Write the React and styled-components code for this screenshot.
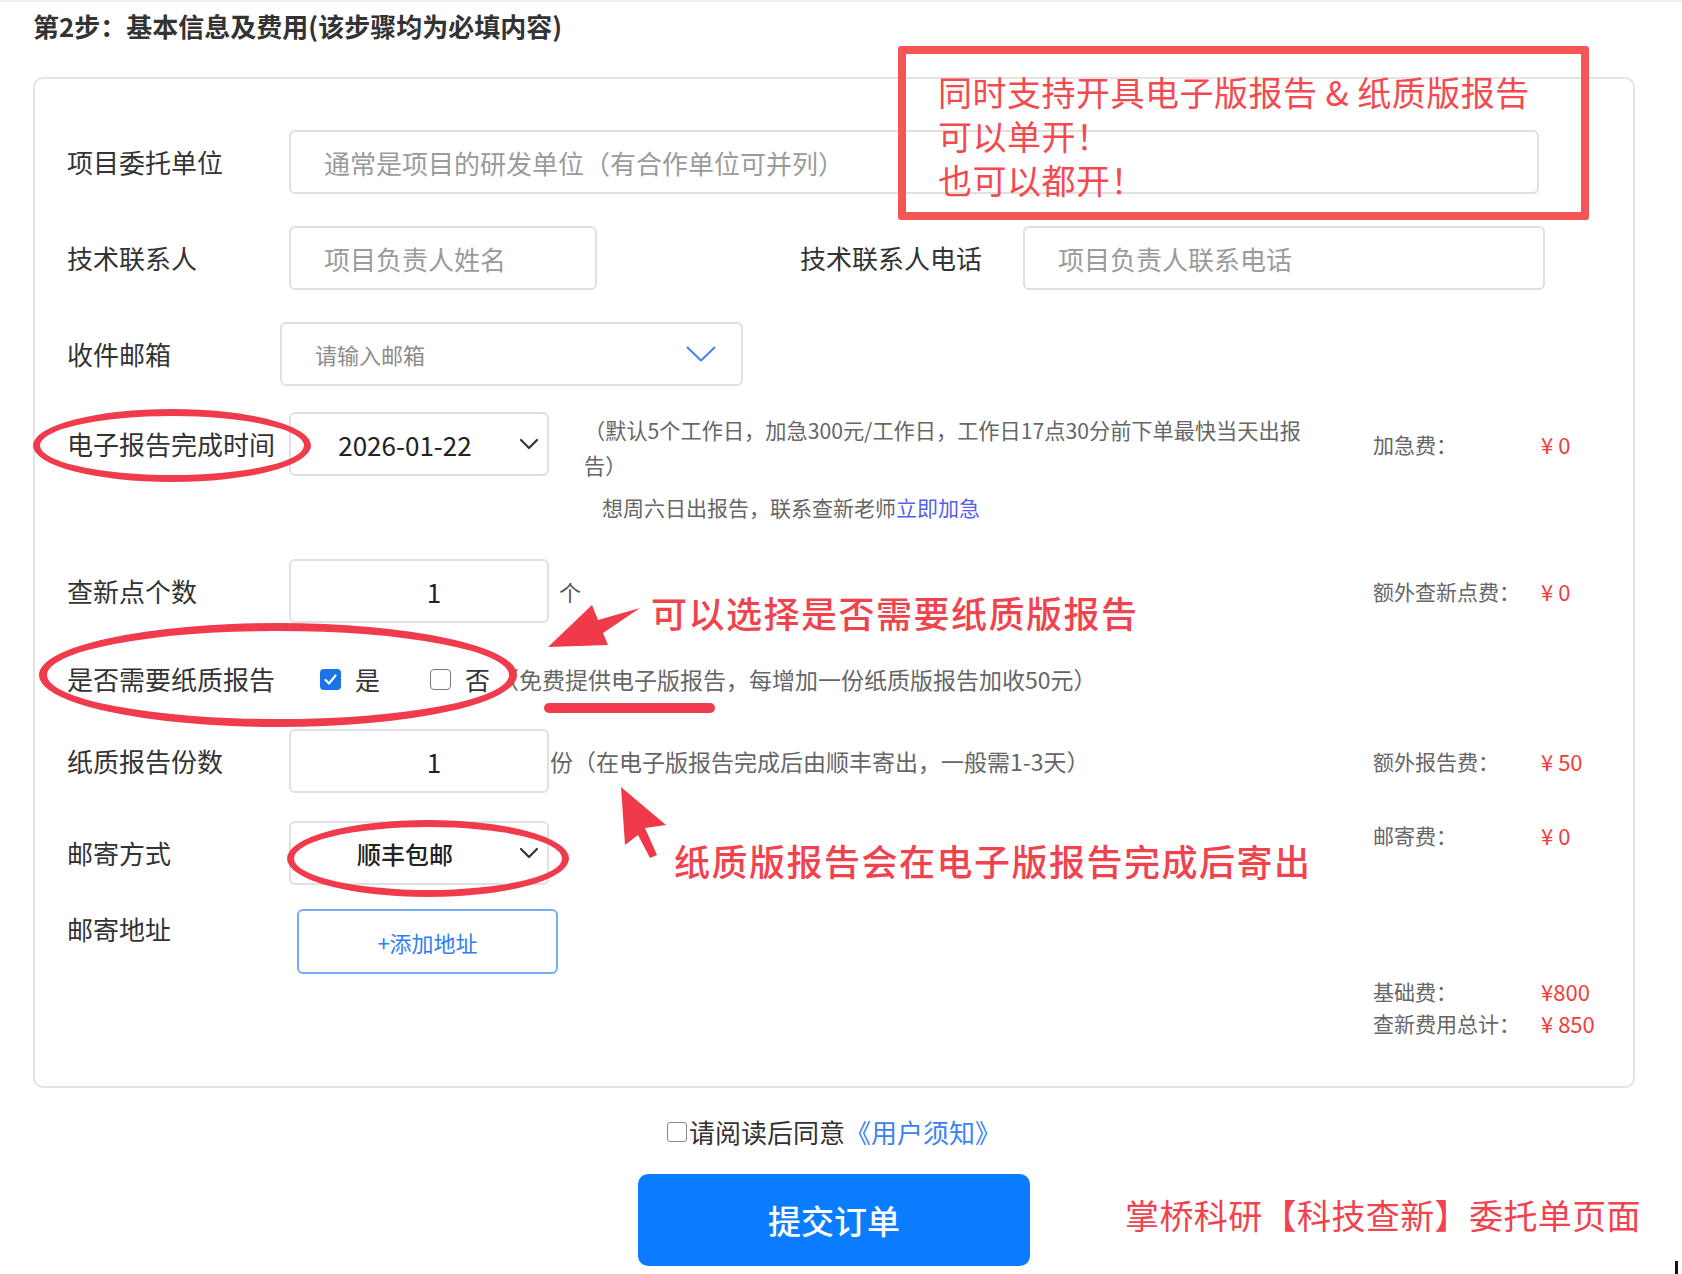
import React from "react";
import styled, { createGlobalStyle } from "styled-components";

const GlobalStyle = createGlobalStyle`
  html, body {
    margin: 0;
    padding: 0;
    background: #fff;
    overflow: hidden;
  }
  body {
    font-family: "Noto Sans CJK SC", "Noto Sans", sans-serif;
    color: #333;
  }
  * {
    box-sizing: border-box;
  }
  input {
    font: inherit;
  }
`;

const fees = {
	urgent: { name: "加急费：", value: "¥ 0" },
	points: { name: "额外查新点费：", value: "¥ 0" },
	report: { name: "额外报告费：", value: "¥ 50" },
	post: { name: "邮寄费：", value: "¥ 0" },
};

function Chevron() {
	return (
		<svg width="20" height="12" viewBox="0 0 20 12">
			<polyline points="2,2 10,10 18,2" fill="none" stroke="#333" strokeWidth="2.2" strokeLinecap="round" strokeLinejoin="round" />
		</svg>
	);
}

function BlueChevron() {
	return (
		<svg width="30" height="16" viewBox="0 0 30 16">
			<polyline points="1.5,1.5 15,14.5 28.5,1.5" fill="none" stroke="#3b86f7" strokeWidth="2" strokeLinecap="round" strokeLinejoin="round" />
		</svg>
	);
}

function FeeCell({ item, h = 64, top }) {
	return (
		<Fee $h={h} $top={top}>
			<FeeName>{item.name}</FeeName>
			<FeeValue>{item.value}</FeeValue>
		</Fee>
	);
}

export default function App() {
	return (
		<>
			<GlobalStyle />
			<Page>
				<TopRule />
				<StepTitle>第2步：基本信息及费用(该步骤均为必填内容)</StepTitle>

				<Card>
					<Row>
						<Label>项目委托单位</Label>
						<Input $w={1250} placeholder="通常是项目的研发单位（有合作单位可并列）" readOnly />
					</Row>

					<Row $gap={32}>
						<Label>技术联系人</Label>
						<Input $w={308} placeholder="项目负责人姓名" readOnly />
						<Label $w={182} $ml={203}>技术联系人电话</Label>
						<Input $w={522} $ml={41} placeholder="项目负责人联系电话" readOnly />
					</Row>

					<Row $gap={32}>
						<Label>收件邮箱</Label>
						<Select $w={463} $ml={-9}>
							<SelectText $left $fs={22} $muted>请输入邮箱</SelectText>
							<ChevronSlot $mr={25}>
								<BlueChevron />
							</ChevronSlot>
						</Select>
					</Row>

					<Row $gap={26} $align="flex-start">
						<Label $lh={64}>电子报告完成时间</Label>
						<Field $column>
							<FieldLine>
								<Select $w={260}>
									<SelectText>2026-01-22</SelectText>
									<ChevronSlot $mr={8}>
										<Chevron />
									</ChevronSlot>
								</Select>
								<Note $ml={35} $fs={21.2} $lh={35}>
									（默认5个工作日，加急300元/工作日，工作日17点30分前下单最快当天出报
									<br />
									告）
								</Note>
							</FieldLine>
							<UrgentTip>
								想周六日出报告，联系查新老师<Link>立即加急</Link>
							</UrgentTip>
						</Field>
						<FeeCell item={fees.urgent} />
					</Row>

					<Row $gap={34}>
						<Label>查新点个数</Label>
						<Field>
							<Input $w={260} $center value="1" readOnly />
							<Unit $ml={10}>个</Unit>
						</Field>
						<FeeCell item={fees.points} />
					</Row>

					<Row $gap={26} $h={60}>
						<Label>是否需要纸质报告</Label>
						<Field>
							<Check $checked $ml={31}>
								<svg width="13" height="11" viewBox="0 0 13 11">
									<polyline points="1.5,6 5,9.5 11.5,1.5" fill="none" stroke="#fff" strokeWidth="2.2" strokeLinecap="round" strokeLinejoin="round" />
								</svg>
							</Check>
							<CheckText>是</CheckText>
							<Check $ml={50} />
							<CheckText>否</CheckText>
							<Note $ml={6} $fs={23} $lh={32}>（免费提供电子版报告，每增加一份纸质版报告加收50元）</Note>
						</Field>
					</Row>

					<Row $gap={20}>
						<Label>纸质报告份数</Label>
						<Field>
							<Input $w={260} $center value="1" readOnly />
							<Note $ml={1} $fs={23} $lh={32}>份（在电子版报告完成后由顺丰寄出，一般需1-3天）</Note>
						</Field>
						<FeeCell item={fees.report} />
					</Row>

					<Row $gap={28} $align="flex-start">
						<Label $lh={64}>邮寄方式</Label>
						<Field>
							<Select $w={260}>
								<SelectText $fs={24} $bold>顺丰包邮</SelectText>
								<ChevronSlot $mr={8}>
									<Chevron />
								</ChevronSlot>
							</Select>
						</Field>
						<FeeCell item={fees.post} h={28} top />
					</Row>

					<Row $gap={24} $align="flex-start">
						<Label $lh={40}>邮寄地址</Label>
						<AddButton>+添加地址</AddButton>
					</Row>

					<Totals>
						<TotalLine>
							<FeeName>基础费：</FeeName>
							<FeeValue>¥800</FeeValue>
						</TotalLine>
						<TotalLine>
							<FeeName>查新费用总计：</FeeName>
							<FeeValue>¥ 850</FeeValue>
						</TotalLine>
					</Totals>
				</Card>

				<Footer>
					<Agreement>
						<AgreeBox />
						请阅读后同意<Link $color="#3b82f6">《用户须知》</Link>
					</Agreement>
					<SubmitButton>提交订单</SubmitButton>
				</Footer>

				{/* hand-drawn callouts on top of the form */}
				<CalloutBox>
					同时支持开具电子版报告 &amp; 纸质版报告
					<br />
					可以单开！
					<br />
					也可以都开！
				</CalloutBox>
				<Ring $x={33} $y={409} $w={278} $h={73} />
				<Ring $x={39} $y={623} $w={478} $h={104} $bw={8} />
				<Ring $x={287} $y={820} $w={282} $h={77} />
				<Stroke />
				<ArrowMark $x={540} $y={598} width="106" height="54" viewBox="0 0 106 54">
					<polygon points="8,49 52,7 58,22 100,10 63,35 68,47" />
				</ArrowMark>
				<ArrowMark $x={615} $y={782} width="56" height="84" viewBox="0 0 56 84">
					<polygon points="6,5 51,43 30,46 42,73 35,76 23,53 10,63" />
				</ArrowMark>
				<CalloutText $x={651} $y={590}>可以选择是否需要纸质版报告</CalloutText>
				<CalloutText $x={674} $y={838}>纸质版报告会在电子版报告完成后寄出</CalloutText>
				<CalloutText $x={1125} $y={1193} $fs={34} $ls={0.4} $weight={400}>
					掌桥科研【科技查新】委托单页面
				</CalloutText>
				<Caret />
			</Page>
		</>
	);
}

const Page = styled.div`
	position: relative;
	width: 1682px;
	height: 1274px;
	overflow: hidden;
	background: #fff;
`;

const TopRule = styled.div`
	height: 2px;
	background: #eeeeee;
`;

const StepTitle = styled.h2`
	margin: 0 0 0 33px;
	font-size: 26px;
	line-height: 48px;
	font-weight: 700;
	color: #333;
	white-space: nowrap;
`;

const Card = styled.div`
	margin: 27px 0 0 33px;
	width: 1602px;
	padding: 51px 33px 47px 32px;
	border: 2px solid #e4e4e4;
	border-radius: 10px;
	background: #fff;
`;

const Row = styled.div`
	display: flex;
	align-items: ${(p) => p.$align || "center"};
	margin-top: ${(p) => p.$gap || 0}px;
	min-height: ${(p) => p.$h || 0}px;
`;

const Label = styled.div`
	flex-shrink: 0;
	width: ${(p) => p.$w || 222}px;
	margin-left: ${(p) => p.$ml || 0}px;
	font-size: 26px;
	line-height: ${(p) => p.$lh || 36}px;
	color: #333;
	white-space: nowrap;
`;

const Field = styled.div`
	flex: 1;
	min-width: 0;
	display: flex;
	flex-direction: ${(p) => (p.$column ? "column" : "row")};
	align-items: ${(p) => (p.$column ? "stretch" : "center")};
`;

const FieldLine = styled.div`
	display: flex;
	align-items: flex-start;
`;

const Input = styled.input`
	flex-shrink: 0;
	width: ${(p) => p.$w}px;
	height: 64px;
	margin: 0 0 0 ${(p) => p.$ml || 0}px;
	padding: 0 0 0 ${(p) => (p.$center ? 30 : 33)}px;
	border: 2px solid #e0e0e0;
	border-radius: 6px;
	background: #fff;
	outline: none;
	font-size: 26px;
	color: #222;
	text-align: ${(p) => (p.$center ? "center" : "left")};

	&::placeholder {
		color: #9b9b9b;
	}
`;

const Select = styled.div`
	flex-shrink: 0;
	display: flex;
	align-items: center;
	width: ${(p) => p.$w}px;
	height: 64px;
	margin-left: ${(p) => p.$ml || 0}px;
	border: 2px solid #e0e0e0;
	border-radius: 6px;
	background: #fff;
`;

const SelectText = styled.span`
	flex: 1;
	padding-left: ${(p) => (p.$left ? 33 : 0)}px;
	text-align: ${(p) => (p.$left ? "left" : "center")};
	font-size: ${(p) => p.$fs || 26}px;
	font-weight: ${(p) => (p.$bold ? 500 : 400)};
	color: ${(p) => (p.$muted ? "#8c8c8c" : "#222")};
	white-space: nowrap;
`;

const ChevronSlot = styled.span`
	display: flex;
	margin-right: ${(p) => p.$mr}px;
`;

const Note = styled.div`
	margin-left: ${(p) => p.$ml || 0}px;
	font-size: ${(p) => p.$fs}px;
	line-height: ${(p) => p.$lh}px;
	color: #666;
	white-space: nowrap;
`;

const UrgentTip = styled.div`
	margin: 8px 0 0 313px;
	font-size: 21px;
	line-height: 35px;
	color: #666;
	white-space: nowrap;
`;

const Link = styled.span`
	color: ${(p) => p.$color || "#5560ee"};
`;

const Unit = styled.span`
	margin-left: ${(p) => p.$ml}px;
	font-size: 22px;
	color: #555;
`;

const Check = styled.span`
	flex-shrink: 0;
	display: flex;
	align-items: center;
	justify-content: center;
	width: 21px;
	height: 21px;
	margin-left: ${(p) => p.$ml || 0}px;
	border-radius: 4px;
	border: ${(p) => (p.$checked ? "none" : "1.5px solid #777")};
	background: ${(p) => (p.$checked ? "#1a73e8" : "#fff")};
`;

const CheckText = styled.span`
	margin-left: 14px;
	font-size: 25px;
	line-height: 36px;
	color: #333;
`;

const Fee = styled.div`
	flex-shrink: 0;
	width: 227px;
	height: ${(p) => p.$h}px;
	display: flex;
	align-items: ${(p) => (p.$top ? "flex-start" : "center")};
	font-size: 21px;
	line-height: 28px;
`;

const FeeName = styled.span`
	flex-shrink: 0;
	width: 168px;
	color: #666;
	white-space: nowrap;
`;

const FeeValue = styled.span`
	font-size: 22px;
	color: #f23c3c;
	white-space: nowrap;
`;

const AddButton = styled.div`
	display: flex;
	align-items: center;
	justify-content: center;
	width: 261px;
	height: 65px;
	margin-left: 8px;
	border: 2px solid #7aa9f5;
	border-radius: 6px;
	font-size: 22px;
	color: #2f7df6;
`;

const Totals = styled.div`
	width: 227px;
	margin: 1px 0 0 auto;
	font-size: 21px;
	line-height: 32px;
`;

const TotalLine = styled.div`
	display: flex;
`;

const Footer = styled.div`
	display: flex;
	flex-direction: column;
	align-items: center;
	width: 1602px;
	margin-left: 33px;
`;

const Agreement = styled.div`
	display: flex;
	align-items: center;
	margin-top: 24px;
	font-size: 26px;
	line-height: 40px;
	color: #333;
	white-space: nowrap;
`;

const AgreeBox = styled.span`
	width: 20px;
	height: 20px;
	margin-right: 2px;
	border: 1.5px solid #888;
	border-radius: 3px;
	background: #fff;
`;

const SubmitButton = styled.div`
	display: flex;
	align-items: center;
	justify-content: center;
	width: 392px;
	height: 92px;
	margin-top: 22px;
	border-radius: 10px;
	background: #0a7cff;
	font-size: 33px;
	font-weight: 500;
	color: #fff;
`;

const CalloutBox = styled.div`
	position: absolute;
	left: 898px;
	top: 46px;
	width: 691px;
	height: 174px;
	padding: 16px 0 0 32px;
	border: 8px solid #f45555;
	border-radius: 3px;
	font-size: 34px;
	line-height: 44px;
	letter-spacing: 0.5px;
	color: #f24a4f;
	white-space: nowrap;
`;

const Ring = styled.div`
	position: absolute;
	left: ${(p) => p.$x}px;
	top: ${(p) => p.$y}px;
	width: ${(p) => p.$w}px;
	height: ${(p) => p.$h}px;
	border: ${(p) => p.$bw || 7}px solid #ef3b4b;
	border-radius: 50%;
`;

const Stroke = styled.div`
	position: absolute;
	left: 544px;
	top: 703px;
	width: 171px;
	height: 10px;
	border-radius: 5px;
	background: #ef3b4b;
`;

const ArrowMark = styled.svg`
	position: absolute;
	left: ${(p) => p.$x}px;
	top: ${(p) => p.$y}px;
	fill: #f03a4a;
`;

const CalloutText = styled.div`
	position: absolute;
	left: ${(p) => p.$x}px;
	top: ${(p) => p.$y}px;
	font-size: ${(p) => p.$fs || 36}px;
	line-height: 44px;
	font-weight: ${(p) => p.$weight || 500};
	letter-spacing: ${(p) => (p.$ls !== undefined ? p.$ls : 1.5)}px;
	color: #f0434d;
	white-space: nowrap;
`;

const Caret = styled.div`
	position: absolute;
	left: 1675px;
	top: 1261px;
	width: 3px;
	height: 13px;
	background: #111;
`;
